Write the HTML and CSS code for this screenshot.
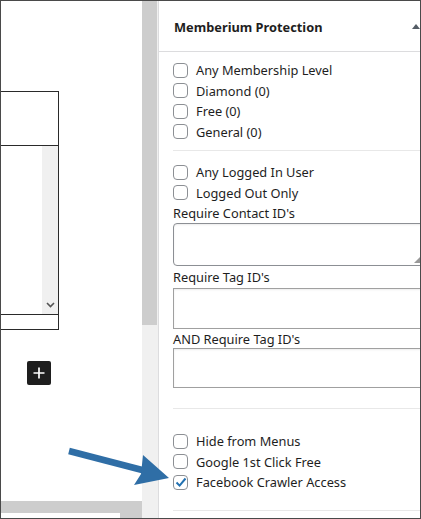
FILE: index.html
```html
<!DOCTYPE html>
<html>
<head>
<meta charset="utf-8">
<link rel="stylesheet" href="styles.css">
</head>
<body>
<div class="frame">
  <div class="left">
    <div class="canvas">
      <div class="block">
        <div class="block-head"></div>
        <div class="block-list">
          <div class="list-body"></div>
          <div class="list-scroll">
            <svg class="chev" width="9" height="6" viewBox="0 0 9 6"><path d="M1 1 L4.5 4.5 L8 1" fill="none" stroke="#555" stroke-width="1.6"/></svg>
          </div>
        </div>
        <div class="block-foot"></div>
      </div>
      <div class="plus-wrap">
        <div class="plus">
          <svg width="14" height="14" viewBox="0 0 14 14"><path d="M7 1.5 V12.5 M1.5 7 H12.5" stroke="#fff" stroke-width="1.7"/></svg>
        </div>
      </div>
    </div>
    <div class="hscroll">
      <div class="hs-top"></div>
      <div class="hs-bottom"><div class="hs-white"></div></div>
    </div>
  </div>
  <div class="vscroll">
    <div class="vs-thumb"></div>
    <div class="vs-track"></div>
  </div>
  <div class="strip"></div>
  <div class="panel">
    <div class="panel-head">
      <h2 class="panel-title">Memberium Protection</h2>
      <span class="caret"></span>
    </div>
    <div class="panel-body">
      <div class="section s1">
        <label class="row"><span class="cb"></span>Any Membership Level</label>
        <label class="row"><span class="cb"></span>Diamond (0)</label>
        <label class="row"><span class="cb"></span>Free (0)</label>
        <label class="row"><span class="cb"></span>General (0)</label>
      </div>
      <div class="section s2">
        <label class="row"><span class="cb"></span>Any Logged In User</label>
        <label class="row"><span class="cb"></span>Logged Out Only</label>
        <div class="field-label">Require Contact ID's</div>
        <div class="ta ta1"><span class="grip"></span></div>
        <div class="field-label fl2">Require Tag ID's</div>
        <div class="ta ta2"></div>
        <div class="field-label fl3">AND Require Tag ID's</div>
        <div class="ta ta3"></div>
      </div>
      <div class="section s3">
        <label class="row"><span class="cb"></span>Hide from Menus</label>
        <label class="row"><span class="cb"></span>Google 1st Click Free</label>
        <label class="row"><span class="cb checked"><svg width="12" height="11" viewBox="0 0 12 11"><path d="M1.5 5.5 L4.6 8.6 L10.5 1.5" fill="none" stroke="#2271b1" stroke-width="2"/></svg></span>Facebook Crawler Access</label>
      </div>
    </div>
  </div>
  <svg class="arrow" width="421" height="519" viewBox="0 0 421 519">
    <path d="M69 451 L146 471" stroke="#2f6ea6" stroke-width="6.5" stroke-linecap="butt"/>
    <path d="M143 455 L169 478 L134 485 L141 474 Z" fill="#2f6ea6"/>
  </svg>
</div>
</body>
</html>
```
FILE: styles.css
```css
* { box-sizing: border-box; }
html, body { margin: 0; padding: 0; background: #fff; }
.frame {
  position: relative;
  width: 421px;
  height: 519px;
  border: 1px solid #4a4a4a;
  overflow: hidden;
  display: flex;
  font-family: "Noto Sans", "Open Sans", sans-serif;
  color: #1e1e1e;
}
.left {
  width: 141px;
  flex: none;
  display: flex;
  flex-direction: column;
}
.canvas {
  flex: 1;
  background: #fff;
  overflow: hidden;
  padding-top: 90px;
}
.block {
  margin-left: -10px;
  width: 68px;
  height: 239px;
  border: 1px solid #2a2a2a;
  display: flex;
  flex-direction: column;
}
.block-head {
  height: 54px;
  border-bottom: 1px solid #2a2a2a;
}
.block-list {
  flex: 1;
  display: flex;
  border-bottom: 1px solid #2a2a2a;
}
.list-body { flex: 1; }
.list-scroll {
  width: 16px;
  background: #f0f0f0;
  display: flex;
  align-items: flex-end;
  justify-content: center;
  padding-bottom: 6px;
}
.block-foot { height: 14px; }
.plus-wrap {
  padding: 31px 0 0 26px;
}
.plus {
  width: 24px;
  height: 24px;
  background: #1e1e1e;
  border-radius: 2px;
  display: flex;
  align-items: center;
  justify-content: center;
}
.hscroll {
  height: 17px;
  display: flex;
  flex-direction: column;
}
.hs-top { height: 12px; background: #cdcdcd; }
.hs-bottom { flex: 1; background: #cdcdcd; display: flex; }
.hs-white { width: 119px; background: #fff; }
.vscroll {
  width: 15px;
  flex: none;
  display: flex;
  flex-direction: column;
}
.vs-thumb { height: 324px; background: #cdcdcd; }
.vs-track { flex: 1; background: #f0f0f0; }
.strip { width: 1px; flex: none; background: #f0f0f0; }
.panel {
  width: 280px;
  flex: none;
  background: #fff;
  border-left: 1px solid #dcdcde;
  font-size: 12.8px;
}
.panel-head {
  height: 51px;
  border-bottom: 1px solid #dcdcde;
  display: flex;
  align-items: center;
  padding-left: 15px;
  padding-top: 2px;
  position: relative;
}
.panel-title {
  margin: 0;
  font-size: 12.8px;
  font-weight: 700;
  color: #1e1e1e;
}
.caret {
  position: absolute;
  left: 253px;
  top: 23px;
  width: 0;
  height: 0;
  border-left: 4px solid transparent;
  border-right: 4px solid transparent;
  border-bottom: 5px solid #555d66;
}
.panel-body { padding-left: 14px; }
.section { width: 247px; border-bottom: 1px solid #e8e8e8; }
.s1 { padding: 8px 0 8px; }
.s2 { padding: 11px 0 20px; }
.s3 { padding: 22px 0 17px; }
.row {
  display: flex;
  align-items: center;
  height: 20.5px;
  gap: 8px;
  white-space: nowrap;
}
.cb {
  width: 15px;
  height: 15px;
  flex: none;
  border: 1px solid #8c8f94;
  border-radius: 4px;
  background: #fff;
  display: flex;
  align-items: center;
  justify-content: center;
}
.field-label {
  height: 20px;
  line-height: 20px;
  white-space: nowrap;
}
.ta {
  position: relative;
  width: 260px;
  border: 1px solid #8c8f94;
  background: #fff;
  box-shadow: inset 0 1px 2px rgba(0,0,0,0.08);
}
.ta1 { height: 43px; border-radius: 4px; }
.fl2 { height: 22px; line-height: 22px; }
.ta2 { height: 41px; border-color: #a0a0a0; }
.fl3 { height: 19px; line-height: 20px; }
.ta3 { height: 40px; border-color: #a0a0a0; }
.grip {
  position: absolute;
  left: 240px;
  bottom: 2px;
  width: 6px;
  height: 6px;
  background:
    radial-gradient(circle, #999 0.8px, transparent 1px) 0 0 / 2px 2px;
  clip-path: polygon(100% 0, 100% 100%, 0 100%);
}
.arrow {
  position: absolute;
  left: -1px;
  top: -1px;
  pointer-events: none;
}
```
